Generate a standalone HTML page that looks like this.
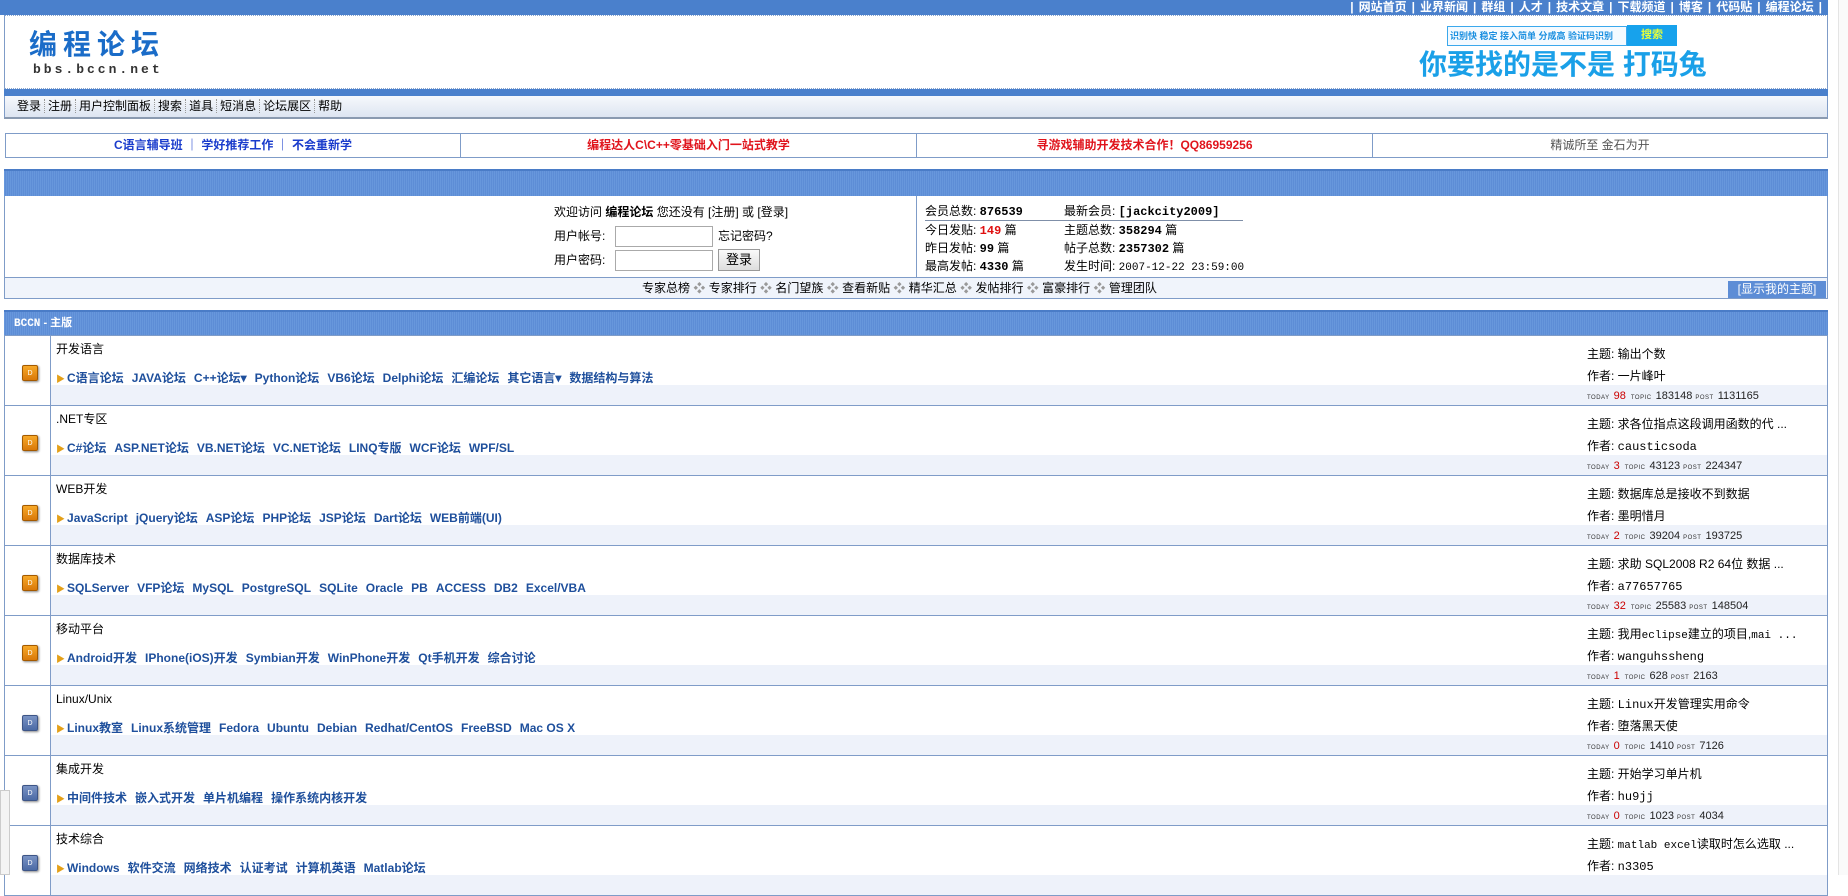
<!DOCTYPE html>
<html><head><meta charset="utf-8">
<style>
*{margin:0;padding:0;box-sizing:border-box}
body{width:1848px;height:875px;overflow:hidden;background:#fff;font-family:"Liberation Sans","Noto Sans CJK SC",sans-serif;font-size:12px;color:#000;position:relative}
.a{position:absolute;white-space:nowrap}
.topbar{left:0;top:0;width:1828px;height:15px;background:#4a80cc}
.toplinks{right:26px;top:0;color:#fff;font-weight:bold;font-size:12px;line-height:14px}
.toplinks span{margin:0 5px}
.hdr{left:4px;top:15px;width:1824px;height:74px;border-left:1px solid #7f9cc8;border-right:1px solid #7f9cc8;border-top:1px dotted #8aa6d0;border-bottom:1px dotted #8aa6d0}
.blu{left:4px;top:89px;width:1824px;height:7px;background:#4a80cc}
.menu{left:4px;top:96px;width:1824px;height:23px;background:linear-gradient(#f6f8fc,#dde5f1);border-left:1px solid #7f9cc8;border-right:1px solid #7f9cc8;border-bottom:2px solid #8a9ab0;font-size:12px;line-height:21px;padding-left:9px}
.menu span{border-right:1px dotted #999;padding:0 3px}
.ann{top:133px;height:25px;border:1px solid #7f9cc8;font-size:12px;line-height:23px;text-align:center;font-weight:bold}
.bhead{left:4px;width:1824px;background:repeating-linear-gradient(90deg,#6797dc 0 1px,#5d8dd6 1px 2px);border-top:2px solid #4a7cc7}
.box{left:4px;width:1824px;border-left:1px solid #7f9cc8;border-right:1px solid #7f9cc8}
.row{left:4px;width:1824px;height:70px;border:1px solid #7f9cc8;border-top:none}
.row .bar{position:absolute;left:46px;right:0;top:49px;height:20px;background:#eef2fa}
.row .ic{position:absolute;left:17px;top:29px;width:16px;height:16px;border-radius:2px;box-shadow:1px 1px 2px #888;font-size:7px;color:#fff;text-align:center;line-height:15px}
.org{background:linear-gradient(#f7a928,#d9780a);border:1px solid #a45a00}
.gry{background:linear-gradient(#7a93c4,#4b6aa5);border:1px solid #3d5587}
.row .sep{position:absolute;left:45px;top:0;bottom:0;border-left:1px solid #7f9cc8}
.row .t{position:absolute;left:51px;top:4px;font-size:12px;line-height:18px}
.row .l{position:absolute;left:51px;top:33px;font-size:12px;line-height:18px;color:#1e4f9c;font-weight:bold;white-space:nowrap}
.row .l b{color:#e4a018;font-size:9px;margin-right:2px}
.row .l i{font-style:normal;margin-right:8px}
.row .r1{position:absolute;left:1582px;top:9px;font-size:12px;line-height:18px;white-space:nowrap}
.row .r2{position:absolute;left:1582px;top:31px;font-size:12px;line-height:18px;white-space:nowrap}
.row .r3{position:absolute;left:1582px;top:53px;font-size:11px;line-height:14px;white-space:nowrap;color:#222}
.sm{font-size:6px;letter-spacing:0.5px;margin:0 4px 0 0;color:#333}
.rd{color:#c00;margin-right:5px}
.mono{font-family:"Liberation Mono","Noto Sans CJK SC",monospace}
</style></head><body>
<div class="a topbar"></div>
<div class="a toplinks">|<span>网站首页</span>|<span>业界新闻</span>|<span>群组</span>|<span>人才</span>|<span>技术文章</span>|<span>下载频道</span>|<span>博客</span>|<span>代码贴</span>|<span>编程论坛</span>|</div>
<div class="a hdr"></div>
<div class="a" style="left:29px;top:28px;font-size:28px;font-weight:bold;color:#1a6cc8;letter-spacing:6px;line-height:34px">编程论坛</div>
<div class="a mono" style="left:33px;top:62px;font-size:13px;font-weight:bold;color:#333;letter-spacing:3px;line-height:16px">bbs.bccn.net</div>
<div class="a" style="left:1447px;top:26px;width:180px;height:20px;border:1px solid #3ba8ec;background:#f4faff;font-size:9px;color:#1a8fe0;line-height:18px;padding-left:2px;font-weight:bold;overflow:hidden">识别快 稳定 接入简单 分成高 验证码识别</div>
<div class="a" style="left:1627px;top:25px;width:50px;height:21px;background:#17a2ec;color:#e6ff3a;font-size:11px;font-weight:bold;text-align:center;line-height:21px">搜索</div>
<div class="a" style="left:1419px;top:48px;font-size:28px;font-weight:bold;color:#1aa0e8;line-height:34px">你要找的是不是 打码兔</div>
<div class="a blu"></div>
<div class="a menu"><span>登录</span><span>注册</span><span>用户控制面板</span><span>搜索</span><span>道具</span><span>短消息</span><span>论坛展区</span><span style="border:none">帮助</span></div>

<div class="a ann" style="left:5px;width:456px;color:#1a3ccc">C语言辅导班 ｜ 学好推荐工作 ｜ 不会重新学</div>
<div class="a ann" style="left:460px;width:457px;color:#e0141c">编程达人C\C++零基础入门一站式教学</div>
<div class="a ann" style="left:916px;width:457px;color:#e0141c">寻游戏辅助开发技术合作！QQ86959256</div>
<div class="a ann" style="left:1372px;width:456px;color:#555;font-weight:normal">精诚所至 金石为开</div>

<div class="a bhead" style="top:169px;height:27px"></div>
<div class="a box" style="top:196px;height:82px;border-bottom:1px solid #7f9cc8"></div>
<div class="a" style="left:916px;top:196px;height:81px;border-left:1px solid #7f9cc8"></div>
<div class="a" style="left:554px;top:204px;font-size:12px;line-height:17px">欢迎访问 <b>编程论坛</b> 您还没有 [注册] 或 [登录]</div>
<div class="a" style="left:554px;top:228px;font-size:12px;line-height:17px">用户帐号:</div>
<div class="a" style="left:615px;top:226px;width:98px;height:21px;border:1px solid #aaa;background:#fff"></div>
<div class="a" style="left:718px;top:228px;font-size:12px;line-height:17px">忘记密码?</div>
<div class="a" style="left:554px;top:252px;font-size:12px;line-height:17px">用户密码:</div>
<div class="a" style="left:615px;top:250px;width:98px;height:21px;border:1px solid #aaa;background:#fff"></div>
<div class="a" style="left:718px;top:249px;width:42px;height:22px;border:1px solid #999;background:linear-gradient(#fafafa,#ddd);font-size:13px;text-align:center;line-height:20px">登录</div>
<div class="a" style="left:925px;top:203px;font-size:12px;line-height:17px">会员总数: <b class="mono">876539</b></div>
<div class="a" style="left:1064px;top:203px;font-size:12px;line-height:17px">最新会员: <b class="mono">[jackcity2009]</b></div>
<div class="a" style="left:925px;top:220px;width:318px;border-top:1px solid #7f8fa8"></div>
<div class="a" style="left:925px;top:222px;font-size:12px;line-height:17px">今日发贴: <b class="mono" style="color:#e01010">149</b> 篇</div>
<div class="a" style="left:1064px;top:222px;font-size:12px;line-height:17px">主题总数: <b class="mono">358294</b> 篇</div>
<div class="a" style="left:925px;top:240px;font-size:12px;line-height:17px">昨日发帖: <b class="mono">99</b> 篇</div>
<div class="a" style="left:1064px;top:240px;font-size:12px;line-height:17px">帖子总数: <b class="mono">2357302</b> 篇</div>
<div class="a" style="left:925px;top:258px;font-size:12px;line-height:17px">最高发帖: <b class="mono">4330</b> 篇</div>
<div class="a" style="left:1064px;top:258px;font-size:12px;line-height:17px">发生时间: <span class="mono" style="font-size:11px">2007-12-22 23:59:00</span></div>
<div class="a" style="left:4px;top:278px;width:1824px;height:21px;background:#f0f4fb;border:1px solid #7f9cc8;border-top:none"></div>
<div class="a" style="left:642px;top:280px;font-size:12px;line-height:17px">专家总榜 <span style="color:#999">❖</span> 专家排行 <span style="color:#999">❖</span> 名门望族 <span style="color:#999">❖</span> 查看新贴 <span style="color:#999">❖</span> 精华汇总 <span style="color:#999">❖</span> 发帖排行 <span style="color:#999">❖</span> 富豪排行 <span style="color:#999">❖</span> 管理团队</div>
<div class="a" style="left:1728px;top:281px;width:98px;height:17px;background:#5d8dd6;color:#fff;font-size:12px;line-height:17px;text-align:center">[显示我的主题]</div>

<div class="a bhead" style="top:310px;height:26px;border-bottom:1px solid #7f9cc8"></div>
<div class="a" style="left:14px;top:316px;color:#fff;font-weight:bold;font-size:11px;line-height:14px"><span class="mono">BCCN</span> - 主版</div>

<div class="a row" style="top:336px"><div class="bar"></div><div class="sep"></div><div class="ic org">D</div><div class="t">开发语言</div>
<div class="l"><b>▶</b><i>C语言论坛</i><i>JAVA论坛</i><i>C++论坛▾</i><i>Python论坛</i><i>VB6论坛</i><i>Delphi论坛</i><i>汇编论坛</i><i>其它语言▾</i><i>数据结构与算法</i></div>
<div class="r1">主题: 输出个数</div><div class="r2">作者: 一片峰叶</div><div class="r3"><span class="sm">TODAY</span><span class="rd">98</span><span class="sm">TOPIC</span>183148 <span class="sm">POST</span>1131165</div></div>

<div class="a row" style="top:406px"><div class="bar"></div><div class="sep"></div><div class="ic org">D</div><div class="t">.NET专区</div>
<div class="l"><b>▶</b><i>C#论坛</i><i>ASP.NET论坛</i><i>VB.NET论坛</i><i>VC.NET论坛</i><i>LINQ专版</i><i>WCF论坛</i><i>WPF/SL</i></div>
<div class="r1">主题: 求各位指点这段调用函数的代 ...</div><div class="r2">作者: <span class="mono">causticsoda</span></div><div class="r3"><span class="sm">TODAY</span><span class="rd">3</span><span class="sm">TOPIC</span>43123 <span class="sm">POST</span>224347</div></div>

<div class="a row" style="top:476px"><div class="bar"></div><div class="sep"></div><div class="ic org">D</div><div class="t">WEB开发</div>
<div class="l"><b>▶</b><i>JavaScript</i><i>jQuery论坛</i><i>ASP论坛</i><i>PHP论坛</i><i>JSP论坛</i><i>Dart论坛</i><i>WEB前端(UI)</i></div>
<div class="r1">主题: 数据库总是接收不到数据</div><div class="r2">作者: 墨明惜月</div><div class="r3"><span class="sm">TODAY</span><span class="rd">2</span><span class="sm">TOPIC</span>39204 <span class="sm">POST</span>193725</div></div>

<div class="a row" style="top:546px"><div class="bar"></div><div class="sep"></div><div class="ic org">D</div><div class="t">数据库技术</div>
<div class="l"><b>▶</b><i>SQLServer</i><i>VFP论坛</i><i>MySQL</i><i>PostgreSQL</i><i>SQLite</i><i>Oracle</i><i>PB</i><i>ACCESS</i><i>DB2</i><i>Excel/VBA</i></div>
<div class="r1">主题: 求助 SQL2008 R2 64位 数据 ...</div><div class="r2">作者: <span class="mono">a77657765</span></div><div class="r3"><span class="sm">TODAY</span><span class="rd">32</span><span class="sm">TOPIC</span>25583 <span class="sm">POST</span>148504</div></div>

<div class="a row" style="top:616px"><div class="bar"></div><div class="sep"></div><div class="ic org">D</div><div class="t">移动平台</div>
<div class="l"><b>▶</b><i>Android开发</i><i>IPhone(iOS)开发</i><i>Symbian开发</i><i>WinPhone开发</i><i>Qt手机开发</i><i>综合讨论</i></div>
<div class="r1">主题: 我用<span class="mono" style="font-size:11px">eclipse</span>建立的项目,<span class="mono" style="font-size:11px">mai ...</span></div><div class="r2">作者: <span class="mono">wanguhssheng</span></div><div class="r3"><span class="sm">TODAY</span><span class="rd">1</span><span class="sm">TOPIC</span>628 <span class="sm">POST</span>2163</div></div>

<div class="a row" style="top:686px"><div class="bar"></div><div class="sep"></div><div class="ic gry">D</div><div class="t">Linux/Unix</div>
<div class="l"><b>▶</b><i>Linux教室</i><i>Linux系统管理</i><i>Fedora</i><i>Ubuntu</i><i>Debian</i><i>Redhat/CentOS</i><i>FreeBSD</i><i>Mac OS X</i></div>
<div class="r1">主题: <span class="mono">Linux</span>开发管理实用命令</div><div class="r2">作者: 堕落黑天使</div><div class="r3"><span class="sm">TODAY</span><span class="rd">0</span><span class="sm">TOPIC</span>1410 <span class="sm">POST</span>7126</div></div>

<div class="a row" style="top:756px"><div class="bar"></div><div class="sep"></div><div class="ic gry">D</div><div class="t">集成开发</div>
<div class="l"><b>▶</b><i>中间件技术</i><i>嵌入式开发</i><i>单片机编程</i><i>操作系统内核开发</i></div>
<div class="r1">主题: 开始学习单片机</div><div class="r2">作者: <span class="mono">hu9jj</span></div><div class="r3"><span class="sm">TODAY</span><span class="rd">0</span><span class="sm">TOPIC</span>1023 <span class="sm">POST</span>4034</div></div>

<div class="a row" style="top:826px"><div class="bar"></div><div class="sep"></div><div class="ic gry">D</div><div class="t">技术综合</div>
<div class="l"><b>▶</b><i>Windows</i><i>软件交流</i><i>网络技术</i><i>认证考试</i><i>计算机英语</i><i>Matlab论坛</i></div>
<div class="r1">主题: <span class="mono" style="font-size:11px">matlab excel</span>读取时怎么选取 ...</div><div class="r2">作者: <span class="mono">n3305</span></div></div>

<div class="a" style="left:0;top:790px;width:10px;height:85px;background:#f4f4f4;border:1px solid #ccc"></div>
<div class="a" style="left:1838px;top:0;width:10px;height:875px;background:#fafafa;border-left:1px solid #e4e4e4"></div>
</body></html>
